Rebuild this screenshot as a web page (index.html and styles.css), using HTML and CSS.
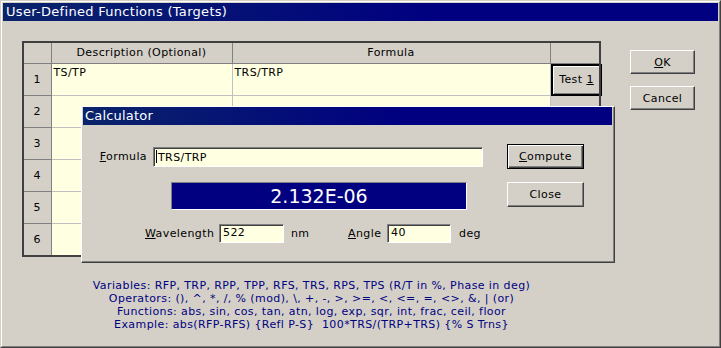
FILE: index.html
```html
<!DOCTYPE html>
<html lang="en">
<head>
  <meta charset="UTF-8" />
  <title>User-Defined Functions (Targets)</title>
  <link rel="stylesheet" href="styles.css">
</head>
<body>

  <div class="window">
    <div class="frame">
      <div class="titlebar">User-Defined Functions (Targets)</div>

      <div class="content">
        <div class="left">
          <table class="grid">
            <colgroup>
              <col class="c-num">
              <col class="c-desc">
              <col class="c-form">
              <col class="c-test">
            </colgroup>
            <tr class="head">
              <th></th>
              <th>Description (Optional)</th>
              <th>Formula</th>
              <th></th>
            </tr>
            <tr>
              <td class="num">1</td>
              <td class="cell">TS/TP</td>
              <td class="cell">TRS/TRP</td>
              <td class="test"><button class="btn btn-test">Test <u>1</u></button></td>
            </tr>
            <tr><td class="num">2</td><td class="cell"></td><td class="cell"></td><td class="test"></td></tr>
            <tr><td class="num">3</td><td class="cell"></td><td class="cell"></td><td class="test"></td></tr>
            <tr><td class="num">4</td><td class="cell"></td><td class="cell"></td><td class="test"></td></tr>
            <tr><td class="num">5</td><td class="cell"></td><td class="cell"></td><td class="test"></td></tr>
            <tr><td class="num">6</td><td class="cell"></td><td class="cell"></td><td class="test"></td></tr>
          </table>

          <div class="help">
            <p>Variables: RFP, TRP, RPP, TPP, RFS, TRS, RPS, TPS (R/T in %, Phase in deg)</p>
            <p>Operators: (), ^, *, /, % (mod), \, +, -, &gt;, &gt;=, &lt;, &lt;=, =, &lt;&gt;, &amp;, | (or)</p>
            <p>Functions: abs, sin, cos, tan, atn, log, exp, sqr, int, frac, ceil, floor</p>
            <p>Example: abs(RFP-RFS) {Refl P-S}&nbsp; 100*TRS/(TRP+TRS) {% S Trns}</p>
          </div>
        </div>

        <div class="side">
          <button class="btn btn-side"><u>O</u>K</button>
          <button class="btn btn-side">Cancel</button>
        </div>
      </div>

      <!-- Calculator dialog over the grid -->
      <div class="calc">
        <div class="titlebar calc-title">Calculator</div>
        <div class="calc-body">
          <div class="row-formula">
            <label><u>F</u>ormula</label>
            <div class="field field-formula"><span class="caret"></span>TRS/TRP</div>
          </div>
          <button class="btn btn-calc btn-default"><u>C</u>ompute</button>

          <div class="result">2.132E-06</div>
          <button class="btn btn-calc">Close</button>

          <div class="row-params">
            <label class="lbl-wave"><u>W</u>avelength</label>
            <div class="field field-small">522</div>
            <span class="unit unit-nm">nm</span>
            <label class="lbl-angle"><u>A</u>ngle</label>
            <div class="field field-small field-angle">40</div>
            <span class="unit">deg</span>
          </div>
        </div>
      </div>
    </div>
  </div>

</body>
</html>
```

FILE: styles.css
```css
body {
  margin: 0;
  font-family: "DejaVu Sans", sans-serif;
  font-size: 11px;
  letter-spacing: 0.4px;
  color: #000;
  background: #d4d0c8;
}

.window {
  width: 721px;
  height: 348px;
  box-sizing: border-box;
  border: 1px solid;
  border-color: #d4d0c8 #404040 #404040 #d4d0c8;
  background: #d4d0c8;
}

.frame {
  position: relative;
  height: 100%;
  box-sizing: border-box;
  border: 1px solid;
  border-color: #fff #808080 #808080 #fff;
  padding: 1px;
}

.titlebar {
  height: 18px;
  line-height: 18px;
  padding-left: 3px;
  color: #fff;
  font-size: 13px;
  letter-spacing: 0.3px;
  background: linear-gradient(to right, #0a246a, #000080 60%);
}

.content {
  display: flex;
  padding: 20px 0 0 19px;
}

/* grid */
.grid {
  border-collapse: collapse;
  table-layout: fixed;
  width: 579px;
  border: 2px solid #404040;
  background: #d4d0c8;
}

.c-num { width: 28px; }
.c-desc { width: 181px; }
.c-form { width: 318px; }
.c-test { width: 50px; }

.grid tr {
  height: 32px;
}

.grid tr.head {
  height: 21px;
}

.grid th {
  font-weight: normal;
  text-align: center;
  padding: 0;
  border-right: 1px solid #808080;
  border-bottom: 1px solid #808080;
}

.grid td {
  padding: 0;
}

.num {
  text-align: center;
  border-right: 1px solid #808080;
  border-bottom: 1px solid #808080;
}

.grid .cell {
  background: #ffffe1;
  vertical-align: top;
  padding: 2px 2px 0;
  border-right: 1px solid #c0c0c0;
  border-bottom: 1px solid #c0c0c0;
}

.test {
  border-left: 1px solid #404040;
}

/* buttons */
.btn {
  font: inherit;
  letter-spacing: inherit;
  color: #000;
  background: #d4d0c8;
  border: 1px solid;
  border-color: #fff #404040 #404040 #fff;
  box-shadow: inset -1px -1px #808080;
  padding: 0;
  box-sizing: border-box;
}

.btn-test {
  display: block;
  width: 51px;
  height: 32px;
  border: 2px solid #000;
  border-right-width: 1px;
  box-shadow: inset 1px 1px #fff, inset -1px -1px #808080;
}

.side {
  display: flex;
  flex-direction: column;
  gap: 12px;
  margin: 9px 0 0 29px;
}

.btn-side {
  width: 65px;
  height: 24px;
}

.help {
  margin-top: 22px;
  color: #000080;
  text-align: center;
  line-height: 13px;
}

.help p {
  margin: 0;
}

/* calculator dialog */
.calc {
  position: absolute;
  left: 79px;
  top: 104px;
  width: 534px;
  height: 157px;
  box-sizing: border-box;
  border: 1px solid;
  border-color: #fff #404040 #404040 #fff;
  box-shadow: inset -1px -1px #808080;
  padding: 0 2px 2px 1px;
  background: #d4d0c8;
}

.calc-title {
  padding-left: 2px;
  letter-spacing: 0.2px;
}

.calc-body {
  display: grid;
  grid-template-columns: 424px 77px;
  grid-template-rows: 25px 28px 20px;
  row-gap: 13px;
  padding-top: 19px;
}

.row-formula {
  display: flex;
  align-items: center;
  justify-content: flex-end;
  gap: 6px;
  padding-right: 24px;
}

.field {
  box-sizing: border-box;
  background: #ffffe1;
  border: 1px solid;
  border-color: #808080 #fff #fff #808080;
  box-shadow: inset 1px 1px #404040;
  padding: 2px 0 0 3px;
  height: 20px;
}

.field-formula {
  width: 330px;
  padding-left: 2px;
}

.caret {
  display: inline-block;
  width: 1px;
  height: 13px;
  background: #000;
  vertical-align: -2px;
  margin-right: 1px;
}

.btn-calc {
  width: 77px;
  height: 25px;
}

.btn-default {
  border: 1px solid #000;
  box-shadow: inset 1px 1px #fff, inset -1px -1px #404040, inset -2px -2px #808080;
}

.result {
  margin-left: 88px;
  width: 296px;
  box-sizing: border-box;
  background: #000080;
  color: #fff;
  font-size: 19px;
  letter-spacing: 0;
  line-height: 26px;
  text-align: center;
  border: 1px solid;
  border-color: #808080 #fff #fff #808080;
}

.row-params {
  display: flex;
  align-items: center;
  margin-top: 1px;
  padding-left: 62px;
}

.lbl-wave {
  width: 74px;
}

.field-small {
  width: 65px;
  height: 19px;
  padding-top: 1px;
}

.unit {
  margin-left: 7px;
}

.unit-nm {
  width: 57px;
}

.lbl-angle {
  width: 39px;
}

.field-angle {
  width: 64px;
}

.field-angle + .unit {
  margin-left: 8px;
}
```
